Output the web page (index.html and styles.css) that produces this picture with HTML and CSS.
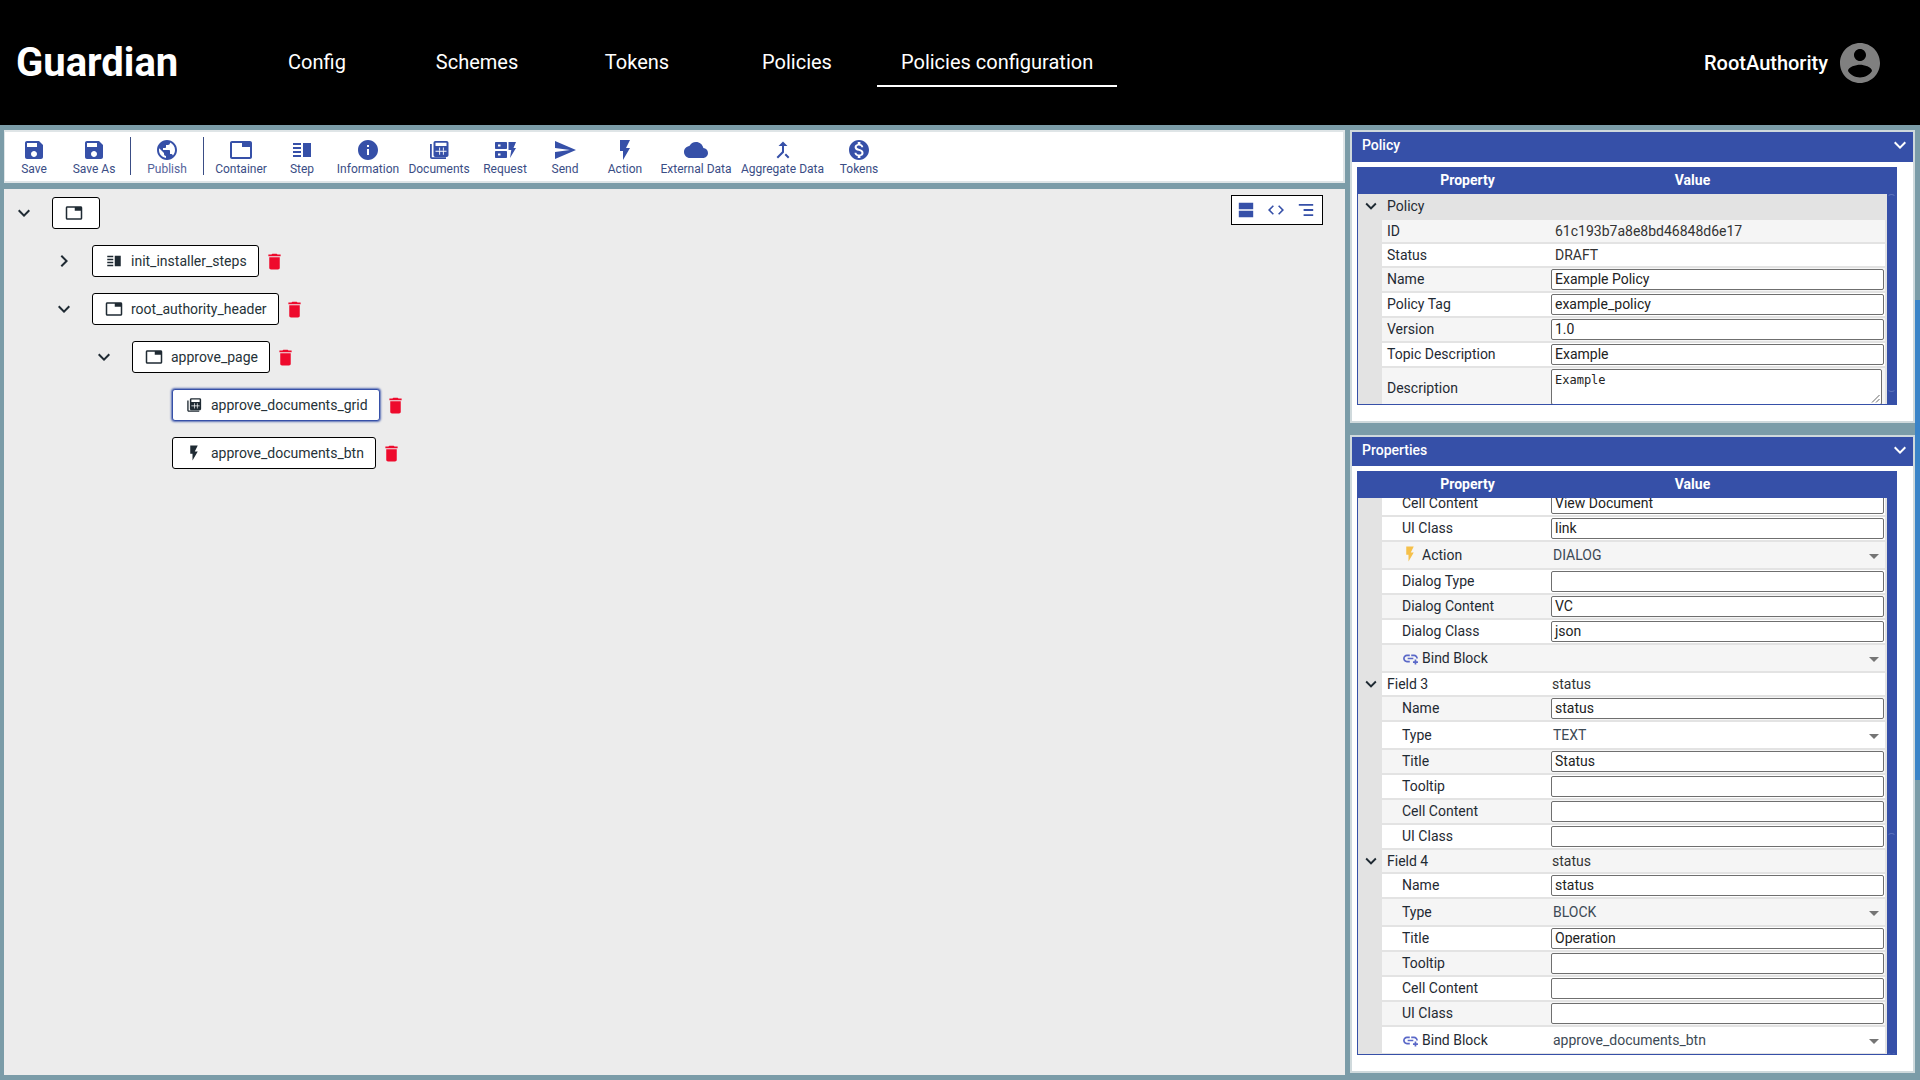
FILE: index.html
```html
<!DOCTYPE html>
<html lang="en">
<head>
<meta charset="utf-8">
<title>Guardian - Policies configuration</title>
<link rel="stylesheet" href="styles.css">
</head>
<body>
<svg class="sprite" aria-hidden="true">
  <symbol id="i-save" viewBox="0 0 24 24"><path d="M17 3H5c-1.11 0-2 .9-2 2v14c0 1.1.89 2 2 2h14c1.1 0 2-.9 2-2V7l-4-4zm-5 16c-1.66 0-3-1.34-3-3s1.34-3 3-3 3 1.34 3 3-1.34 3-3 3zm3-10H5V5h10v4z"/></symbol>
  <symbol id="i-public" viewBox="0 0 24 24"><path d="M12 2C6.48 2 2 6.48 2 12s4.48 10 10 10 10-4.48 10-10S17.52 2 12 2zm-1 17.93c-3.95-.49-7-3.85-7-7.93 0-.62.08-1.21.21-1.79L9 15v1c0 1.1.9 2 2 2v1.93zm6.9-2.54c-.26-.81-1-1.39-1.9-1.39h-1v-3c0-.55-.45-1-1-1H8v-2h2c.55 0 1-.45 1-1V7h2c1.1 0 2-.9 2-2v-.41c2.93 1.19 5 4.06 5 7.41 0 2.08-.8 3.97-2.1 5.39z"/></symbol>
  <symbol id="i-tab" viewBox="0 0 24 24"><path d="M21 3H3c-1.1 0-2 .9-2 2v14c0 1.1.9 2 2 2h18c1.1 0 2-.9 2-2V5c0-1.1-.9-2-2-2zm0 16H3V5h10v4h8v10z"/></symbol>
  <symbol id="i-step" viewBox="0 0 24 24"><path d="M3 15h8v-2H3v2zm0 4h8v-2H3v2zm0-8h8V9H3v2zm0-6v2h8V5H3zm10 0h8v14h-8V5z"/></symbol>
  <symbol id="i-info" viewBox="0 0 24 24"><path d="M12 2C6.48 2 2 6.48 2 12s4.48 10 10 10 10-4.48 10-10S17.52 2 12 2zm1 15h-2v-6h2v6zm0-8h-2V7h2v2z"/></symbol>
  <symbol id="i-docs" viewBox="0 0 24 24"><path d="M3 6h1.800v13.200H19V21H5c-1.200 0-2-.8-2-2V6z"/><path fill-rule="evenodd" d="M8.500 3h11c1.300 0 2 .7 2 2v12c0 1.300-.7 2-2 2h-11c-1.300 0-2-.7-2-2V5c0-1.300.7-2 2-2zm0 1.700V8h11V4.700h-11zm3.700 4.800v3h.9v-3h-.9zm3.700 0v3h.9v-3h-.9zm-3.700 4.300v3h.9v-3h-.9zm3.700 0v3h.9v-3h-.9zM8.500 12.700v1h11v-1h-11z"/></symbol>
  <symbol id="i-request" viewBox="0 0 24 24"><path fill-rule="evenodd" d="M3 4h10c.6 0 1 .4 1 1v5c0 .6-.4 1-1 1H3c-.6 0-1-.4-1-1V5c0-.6.4-1 1-1zm2 2.500v2h2.500v-2H5zM3 13h10c.6 0 1 .4 1 1v5c0 .6-.4 1-1 1H3c-.6 0-1-.4-1-1v-5c0-.6.4-1 1-1zm2 2.500v2h2.500v-2H5z"/><path d="M15.500 4H23l-2.500 6H23l-6 10 1.300-8h-2.800z"/></symbol>
  <symbol id="i-send" viewBox="0 0 24 24"><path d="M2.010 21L23 12 2.010 3 2 10l15 2-15 2z"/></symbol>
  <symbol id="i-flash" viewBox="0 0 24 24"><path d="M7 2v11h3v9l7-12h-4l4-8z"/></symbol>
  <symbol id="i-cloud" viewBox="0 0 24 24"><path d="M19.350 10.040C18.670 6.590 15.640 4 12 4 9.110 4 6.600 5.640 5.350 8.040 2.340 8.360 0 10.910 0 14c0 3.310 2.690 6 6 6h13c2.760 0 5-2.240 5-5 0-2.640-2.050-4.780-4.650-4.960z"/></symbol>
  <symbol id="i-merge" viewBox="0 0 24 24"><path d="M17 20.410L18.410 19 15 15.590 13.590 17 17 20.410zM7.500 8H11v5.590L5.590 19 7 20.410l6-6V8h3.500L12 3.500 7.500 8z"/></symbol>
  <symbol id="i-paid" viewBox="0 0 24 24"><path d="M12 2C6.480 2 2 6.480 2 12s4.480 10 10 10 10-4.480 10-10S17.520 2 12 2zm1.410 16.090V20h-2.670v-1.930c-1.710-.36-3.160-1.460-3.270-3.400h1.960c.1 1.050.82 1.870 2.650 1.870 1.960 0 2.400-.98 2.400-1.590 0-.83-.44-1.610-2.670-2.140-2.480-.6-4.180-1.620-4.180-3.670 0-1.720 1.390-2.840 3.110-3.210V4h2.670v1.950c1.860.45 2.790 1.860 2.850 3.390H14.300c-.05-1.110-.64-1.870-2.220-1.870-1.500 0-2.400.68-2.400 1.640 0 .84.65 1.390 2.670 1.910s4.180 1.390 4.180 3.910c-.01 1.830-1.380 2.830-3.120 3.160z"/></symbol>
  <symbol id="i-account" viewBox="0 0 24 24"><path d="M12 2C6.480 2 2 6.480 2 12s4.480 10 10 10 10-4.480 10-10S17.520 2 12 2zm0 3c1.660 0 3 1.340 3 3s-1.340 3-3 3-3-1.340-3-3 1.340-3 3-3zm0 14.200c-2.500 0-4.710-1.280-6-3.220.03-1.990 4-3.080 6-3.080 1.990 0 5.970 1.090 6 3.080-1.290 1.940-3.500 3.220-6 3.220z"/></symbol>
  <symbol id="i-delete" viewBox="0 0 24 24"><path d="M6 19c0 1.100.9 2 2 2h8c1.100 0 2-.9 2-2V7H6v12zM19 4h-3.500l-1-1h-5l-1 1H5v2h14V4z"/></symbol>
  <symbol id="i-more" viewBox="0 0 24 24"><path d="M16.590 8.590L12 13.170 7.410 8.590 6 10l6 6 6-6z"/></symbol>
  <symbol id="i-right" viewBox="0 0 24 24"><path d="M10 6L8.590 7.410 13.170 12l-4.580 4.590L10 18l6-6z"/></symbol>
  <symbol id="i-agenda" viewBox="0 0 24 24"><path d="M3 13h18v8H3zM3 3h18v8H3z"/></symbol>
  <symbol id="i-code" viewBox="0 0 24 24"><path d="M9.400 16.600L4.800 12l4.600-4.600L8 6l-6 6 6 6 1.400-1.400zm5.200 0l4.600-4.600-4.600-4.600L16 6l6 6-6 6-1.400-1.400z"/></symbol>
  <symbol id="i-lines" viewBox="0 0 24 24"><path d="M3 4.500h18v2.200H3zM9 10.900h12v2.200H9zM9 17.300h12v2.200H9z"/></symbol>
  <symbol id="i-bind" viewBox="0 0 24 24"><path d="M3.900 12c0-1.710 1.390-3.100 3.100-3.100h4V6.500H7c-3 0-5.500 2.500-5.500 5.500s2.500 5.500 5.500 5.500h4v-2.400H7c-1.710 0-3.100-1.390-3.100-3.100zM8 13.200h8v-2.400H8v2.400zm9-6.700h-4v2.400h4c1.710 0 3.100 1.390 3.100 3.100h2.400c0-3-2.500-5.500-5.500-5.500z"/><path d="M17.800 13.500h2.400v2.300h2.300v2.400h-2.300v2.300h-2.400v-2.300h-2.300v-2.400h2.300z"/></symbol>
</svg>

<header class="topbar">
  <div class="logo">Guardian</div>
  <nav class="nav">
    <a class="tab">Config</a>
    <a class="tab">Schemes</a>
    <a class="tab">Tokens</a>
    <a class="tab">Policies</a>
    <a class="tab tab-active">Policies configuration</a>
  </nav>
  <div class="user">
    <span class="user-name">RootAuthority</span>
    <svg class="avatar"><use href="#i-account"/></svg>
  </div>
</header>

<main class="workspace">
  <section class="editor">
    <div class="toolbar">
      <div class="tool"><svg class="tool-icon"><use href="#i-save"/></svg><span>Save</span></div>
      <div class="tool"><svg class="tool-icon"><use href="#i-save"/></svg><span>Save As</span></div>
      <div class="tool-sep"></div>
      <div class="tool tool-muted"><svg class="tool-icon"><use href="#i-public"/></svg><span>Publish</span></div>
      <div class="tool-sep"></div>
      <div class="tool tool-first"><svg class="tool-icon"><use href="#i-tab"/></svg><span>Container</span></div>
      <div class="tool w62"><svg class="tool-icon"><use href="#i-step"/></svg><span>Step</span></div>
      <div class="tool w70"><svg class="tool-icon"><use href="#i-info"/></svg><span>Information</span></div>
      <div class="tool w72"><svg class="tool-icon"><use href="#i-docs"/></svg><span>Documents</span></div>
      <div class="tool"><svg class="tool-icon"><use href="#i-request"/></svg><span>Request</span></div>
      <div class="tool"><svg class="tool-icon"><use href="#i-send"/></svg><span>Send</span></div>
      <div class="tool"><svg class="tool-icon"><use href="#i-flash"/></svg><span>Action</span></div>
      <div class="tool w82"><svg class="tool-icon"><use href="#i-cloud"/></svg><span>External Data</span></div>
      <div class="tool w91"><svg class="tool-icon"><use href="#i-merge"/></svg><span>Aggregate Data</span></div>
      <div class="tool w62"><svg class="tool-icon"><use href="#i-paid"/></svg><span>Tokens</span></div>
    </div>

    <div class="canvas">
      <div class="view-switch">
        <svg class="view-icon"><use href="#i-agenda"/></svg>
        <svg class="view-icon"><use href="#i-code"/></svg>
        <svg class="view-icon"><use href="#i-lines"/></svg>
      </div>
      <div class="tree">
        <div class="node">
          <svg class="caret"><use href="#i-more"/></svg>
          <div class="block block-root"><svg class="block-icon"><use href="#i-tab"/></svg></div>
        </div>
        <div class="node lvl1">
          <svg class="caret"><use href="#i-right"/></svg>
          <div class="block"><svg class="block-icon"><use href="#i-step"/></svg><span>init_installer_steps</span></div>
          <svg class="trash"><use href="#i-delete"/></svg>
        </div>
        <div class="node lvl1">
          <svg class="caret"><use href="#i-more"/></svg>
          <div class="block"><svg class="block-icon"><use href="#i-tab"/></svg><span>root_authority_header</span></div>
          <svg class="trash"><use href="#i-delete"/></svg>
        </div>
        <div class="node lvl2">
          <svg class="caret"><use href="#i-more"/></svg>
          <div class="block"><svg class="block-icon"><use href="#i-tab"/></svg><span>approve_page</span></div>
          <svg class="trash"><use href="#i-delete"/></svg>
        </div>
        <div class="node lvl3">
          <div class="caret-gap"></div>
          <div class="block block-selected"><svg class="block-icon"><use href="#i-docs"/></svg><span>approve_documents_grid</span></div>
          <svg class="trash"><use href="#i-delete"/></svg>
        </div>
        <div class="node lvl3">
          <div class="caret-gap"></div>
          <div class="block"><svg class="block-icon"><use href="#i-flash"/></svg><span>approve_documents_btn</span></div>
          <svg class="trash"><use href="#i-delete"/></svg>
        </div>
      </div>
    </div>
  </section>

  <aside class="sidebar">
    <section class="panel panel-policy">
      <div class="panel-head"><span>Policy</span><svg class="panel-chevron"><use href="#i-more"/></svg></div>
      <div class="grid-wrap grid-policy">
        <div class="grid-head"><span class="gh-prop">Property</span><span class="gh-val">Value</span></div>
        <div class="grid-body">
          <div class="rows">
            <div class="row row-group">
              <svg class="row-caret"><use href="#i-more"/></svg>
              <div class="prop">Policy</div>
            </div>
            <div class="row row-text odd"><div class="prop">ID</div><div class="val val-text">61c193b7a8e8bd46848d6e17</div></div>
            <div class="row row-text"><div class="prop">Status</div><div class="val val-text">DRAFT</div></div>
            <div class="row odd"><div class="prop">Name</div><div class="val"><div class="field">Example Policy</div></div></div>
            <div class="row"><div class="prop">Policy Tag</div><div class="val"><div class="field">example_policy</div></div></div>
            <div class="row odd"><div class="prop">Version</div><div class="val"><div class="field">1.0</div></div></div>
            <div class="row"><div class="prop">Topic Description</div><div class="val"><div class="field">Example</div></div></div>
            <div class="row row-area odd"><div class="prop">Description</div><div class="val"><div class="area">Example<svg class="grip" viewBox="0 0 9 9"><path d="M8.500 1L1 8.500M8.500 5L5 8.500"/></svg></div></div></div>
          </div>
          <div class="vbar"><div class="thumb thumb-policy"></div></div>
        </div>
      </div>
    </section>

    <section class="panel panel-props">
      <div class="panel-head"><span>Properties</span><svg class="panel-chevron"><use href="#i-more"/></svg></div>
      <div class="grid-wrap grid-props">
        <div class="grid-head"><span class="gh-prop">Property</span><span class="gh-val">Value</span></div>
        <div class="grid-body">
          <div class="rows rows-scrolled">
            <div class="row"><div class="prop nest">Cell Content</div><div class="val"><div class="field">View Document</div></div></div>
            <div class="row"><div class="prop nest">UI Class</div><div class="val"><div class="field">link</div></div></div>
            <div class="row row-select odd"><div class="prop nest nest-icon"><svg class="flash"><use href="#i-flash"/></svg>Action</div><div class="val val-select"><span>DIALOG</span><i class="arrow"></i></div></div>
            <div class="row"><div class="prop nest">Dialog Type</div><div class="val"><div class="field"></div></div></div>
            <div class="row odd"><div class="prop nest">Dialog Content</div><div class="val"><div class="field">VC</div></div></div>
            <div class="row"><div class="prop nest">Dialog Class</div><div class="val"><div class="field">json</div></div></div>
            <div class="row row-select odd"><div class="prop nest nest-icon"><svg class="bind"><use href="#i-bind"/></svg>Bind Block</div><div class="val val-select"><span></span><i class="arrow"></i></div></div>
            <div class="row row-text"><svg class="row-caret"><use href="#i-more"/></svg><div class="prop">Field 3</div><div class="val val-plain">status</div></div>
            <div class="row odd"><div class="prop nest">Name</div><div class="val"><div class="field">status</div></div></div>
            <div class="row row-select"><div class="prop nest">Type</div><div class="val val-select"><span>TEXT</span><i class="arrow"></i></div></div>
            <div class="row odd"><div class="prop nest">Title</div><div class="val"><div class="field">Status</div></div></div>
            <div class="row"><div class="prop nest">Tooltip</div><div class="val"><div class="field"></div></div></div>
            <div class="row odd"><div class="prop nest">Cell Content</div><div class="val"><div class="field"></div></div></div>
            <div class="row"><div class="prop nest">UI Class</div><div class="val"><div class="field"></div></div></div>
            <div class="row row-text odd"><svg class="row-caret"><use href="#i-more"/></svg><div class="prop">Field 4</div><div class="val val-plain">status</div></div>
            <div class="row"><div class="prop nest">Name</div><div class="val"><div class="field">status</div></div></div>
            <div class="row row-select odd"><div class="prop nest">Type</div><div class="val val-select"><span>BLOCK</span><i class="arrow"></i></div></div>
            <div class="row"><div class="prop nest">Title</div><div class="val"><div class="field">Operation</div></div></div>
            <div class="row odd"><div class="prop nest">Tooltip</div><div class="val"><div class="field"></div></div></div>
            <div class="row"><div class="prop nest">Cell Content</div><div class="val"><div class="field"></div></div></div>
            <div class="row odd"><div class="prop nest">UI Class</div><div class="val"><div class="field"></div></div></div>
            <div class="row row-select"><div class="prop nest nest-icon"><svg class="bind"><use href="#i-bind"/></svg>Bind Block</div><div class="val val-select"><span>approve_documents_btn</span><i class="arrow"></i></div></div>
          </div>
          <div class="vbar"><div class="thumb thumb-props"></div></div>
        </div>
      </div>
    </section>
  </aside>
  <div class="page-scroll"></div>
</main>
</body>
</html>
```

FILE: styles.css
```css
* { box-sizing: border-box; }

html, body { height: 100%; }

body {
  margin: 0;
  overflow: hidden;
  background: #7b9ca8;
  font-family: Roboto, "Liberation Sans", sans-serif;
  font-size: 14px;
  color: #1f2a33;
}

.sprite { display: none; }

svg { fill: currentColor; flex: none; }

/* Top bar */
.topbar {
  display: flex;
  align-items: center;
  height: 125px;
  background: #000;
  color: #fff;
  padding: 0 36px 0 16px;
}

.logo {
  width: 221px;
  font-size: 40px;
  font-weight: 700;
}

.nav { display: flex; }

.tab {
  display: flex;
  align-items: center;
  justify-content: center;
  min-width: 160px;
  height: 48px;
  padding: 0 24px;
  font-size: 20px;
  border-bottom: 2px solid transparent;
}

.tab-active { border-bottom-color: #fff; }

.user {
  display: flex;
  align-items: center;
  gap: 8px;
  margin-left: auto;
}

.user-name { font-size: 20px; font-weight: 500; }

.avatar { width: 48px; height: 48px; color: #808080; }

/* Workspace */
.workspace {
  position: relative;
  display: flex;
  gap: 5px;
  height: 955px;
  padding: 5px 5px 0 4px;
}

.editor {
  display: flex;
  flex-direction: column;
  gap: 6px;
  width: 1341px;
  height: 945px;
}

/* Toolbar */
.toolbar {
  display: flex;
  height: 53px;
  background: #fff;
  border: 2px solid #dfe5e7;
  border-left-width: 1px;
  padding-top: 6px;
}

.tool {
  display: flex;
  flex-direction: column;
  align-items: center;
  width: 60px;
  color: #3a4d85;
  font-size: 12px;
  line-height: 14px;
  white-space: nowrap;
}

.tool:first-child { margin-left: -1px; }

.tool-first { margin-left: 1px; }

.tool-muted span { color: #55639b; }

.tool-icon { width: 24px; height: 24px; color: #3650a8; }

.tool-sep {
  width: 1px;
  height: 38px;
  margin: -1px 6px 0;
  background: #3a4d85;
}

.w62 { width: 62px; }
.w70 { width: 70px; }
.w72 { width: 72px; }
.w82 { width: 82px; }
.w91 { width: 91px; }

/* Canvas */
.canvas {
  position: relative;
  flex: 1;
  background: #ececec;
  padding: 8px 0 0 8px;
}

.view-switch {
  position: absolute;
  top: 6px;
  right: 22px;
  display: flex;
  align-items: center;
  justify-content: center;
  gap: 6px;
  width: 92px;
  height: 30px;
  padding-right: 2px;
  background: #fff;
  border: 1px solid #000;
}

.view-icon { width: 24px; height: 24px; color: #3650a8; transform: scale(0.8); }

.tree { display: flex; flex-direction: column; gap: 16px; }

.node { display: flex; align-items: center; height: 32px; }

.lvl1 { padding-left: 40px; }
.lvl2 { padding-left: 80px; }
.lvl3 { padding-left: 120px; }

.caret { width: 24px; height: 24px; margin-right: 16px; color: #1f2a33; }

.caret-gap { width: 40px; }

.block {
  display: flex;
  align-items: center;
  gap: 8px;
  height: 32px;
  padding: 0 11px 0 12px;
  background: #fff;
  border: 1px solid #000;
  border-radius: 3px;
  white-space: nowrap;
  color: #263238;
}

.block-root { width: 48px; }

.block-selected {
  border: 1px solid #3650a8;
  box-shadow: 0 0 2px 1px rgba(54, 80, 168, 0.8);
}

.block-icon { width: 18px; height: 18px; color: #1f2a33; }

.trash { width: 21px; height: 21px; margin-left: 5px; color: #ee0a2c; }

/* Right side panels */
.sidebar {
  display: flex;
  flex-direction: column;
  gap: 12px;
  width: 565px;
  height: 943px;
}

.panel {
  display: flex;
  flex-direction: column;
  background: #fff;
  border: 2px solid #cfd9dc;
}

.panel-policy { height: 293px; }

.panel-props { flex: 1; }

.panel-head {
  display: flex;
  align-items: center;
  justify-content: space-between;
  flex: none;
  height: 30px;
  padding: 0 1px 4px 10px;
  background: #3650a8;
  color: #fff;
  font-weight: 500;
}

.panel-props .panel-head { height: 29px; }

.panel-chevron { width: 24px; height: 24px; }

.grid-wrap {
  display: flex;
  flex-direction: column;
  width: 540px;
  margin: 5px 0 0 5px;
  border: 1px solid #3650a8;
  overflow: hidden;
}

.grid-policy { height: 238px; }

.grid-props { height: 584px; }

.grid-head {
  display: flex;
  flex: none;
  height: 26px;
  padding-bottom: 2px;
  align-items: center;
  background: #3650a8;
  color: #fff;
  font-weight: 700;
  text-align: center;
}

.gh-prop { width: 219px; }

.gh-val { width: 231px; }

.grid-body {
  display: flex;
  flex: 1;
  min-height: 0;
  overflow: hidden;
  background: #e3e3e3;
}

.rows {
  flex: 1;
  min-width: 0;
  padding-right: 2px;
}

.rows-scrolled { margin-top: -6px; }

.row {
  position: relative;
  display: flex;
  height: 23px;
  margin: 0 0 2px 24px;
  background: #fff;
  line-height: 23px;
}

.odd { background: #f5f5f5; }

.row-text { height: 22px; line-height: 22px; }

.row-select { height: 26px; line-height: 26px; }

.row-area { height: 37px; margin-bottom: 0; }

.row-group {
  height: 26px;
  line-height: 24px;
  margin: 0;
  padding-left: 24px;
  background: #e3e3e3;
}

.row-caret {
  position: absolute;
  left: -22px;
  top: 50%;
  width: 22px;
  height: 22px;
  margin-top: -11px;
  color: #1f2a33;
}

.row-group .row-caret { left: 2px; margin-top: -12px; }

.prop {
  flex: none;
  width: 166px;
  margin-right: 2px;
  padding-left: 5px;
  white-space: nowrap;
  color: #1f2a33;
}

.row-area .prop { line-height: 40px; }

.nest { padding-left: 20px; }

.nest-icon {
  display: flex;
  align-items: center;
  padding-left: 20px;
}

.flash { width: 18px; height: 18px; margin: -2px 3px 0 -1px; color: #f5c04a; }

.bind { width: 17px; height: 17px; margin-right: 3px; color: #5a68c8; }

.val { flex: 1; min-width: 0; position: relative; }

.val-text { padding-left: 5px; color: #333; }

.val-plain { padding-left: 2px; color: #333; }

.val-select {
  display: flex;
  align-items: center;
  justify-content: space-between;
  padding: 0 6px 0 3px;
  color: #3d4a55;
}

.arrow {
  display: block;
  width: 0;
  height: 0;
  margin-top: 2px;
  border-left: 5px solid transparent;
  border-right: 5px solid transparent;
  border-top: 5px solid #757575;
}

.field {
  width: 333px;
  height: 21px;
  margin: 1px;
  padding-left: 3px;
  line-height: 19px;
  background: #fff;
  border: 1px solid #6f6f6f;
  border-radius: 2px;
  color: #222;
}

.area {
  position: relative;
  width: 331px;
  height: 36px;
  margin: 1px;
  padding: 1px 3px 0;
  background: #fff;
  border: 1px solid #6f6f6f;
  border-radius: 2px;
  font-family: "DejaVu Sans Mono", "Liberation Mono", monospace;
  font-size: 12px;
  line-height: 18px;
  color: #222;
}

.grip {
  position: absolute;
  right: 1px;
  bottom: 1px;
  width: 9px;
  height: 9px;
  fill: none;
  stroke: #666;
  stroke-width: 1;
}

/* Scrollbars */
.vbar {
  position: relative;
  flex: none;
  width: 9px;
  background: #3650a8;
}

.thumb {
  position: absolute;
  left: 0;
  right: 0;
  border: 1px solid #5e74bc;
  border-left-color: transparent;
  border-right-color: transparent;
  border-radius: 5px;
}

.thumb-policy { top: 0; height: 198px; }

.thumb-props { top: 335px; height: 222px; }

.page-scroll {
  position: absolute;
  top: 175px;
  right: 0;
  width: 5px;
  height: 480px;
  background: #3a84c8;
}
```
